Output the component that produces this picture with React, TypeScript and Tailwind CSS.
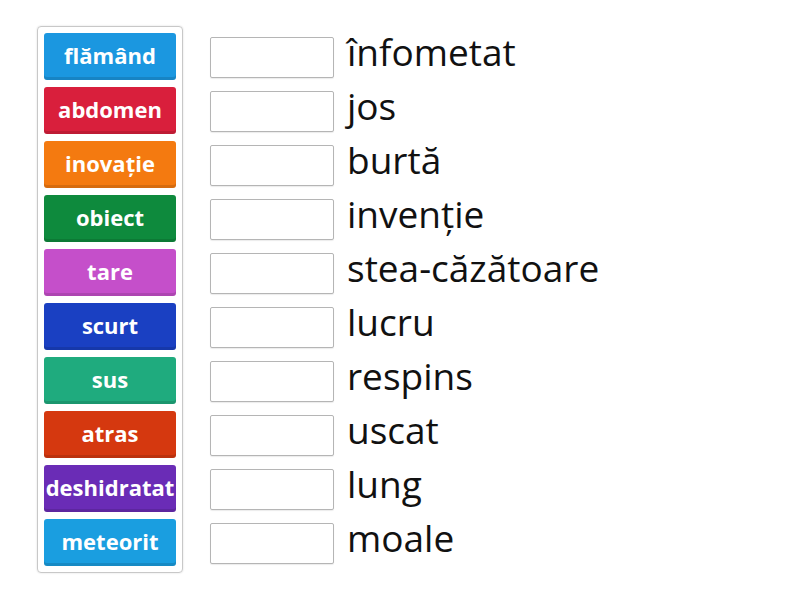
import React from "react";

const tiles: { label: string; cls: string }[] = [
  { label: "flămând", cls: "bg-[#1b97e0]" },
  { label: "abdomen", cls: "bg-[#d91f3c]" },
  { label: "inovație", cls: "bg-[#f47a10]" },
  { label: "obiect", cls: "bg-[#0e8a3d]" },
  { label: "tare", cls: "bg-[#c54fca]" },
  { label: "scurt", cls: "bg-[#1a40c2]" },
  { label: "sus", cls: "bg-[#1fab7e]" },
  { label: "atras", cls: "bg-[#d5380f]" },
  { label: "deshidratat", cls: "bg-[#6a2cb6]" },
  { label: "meteorit", cls: "bg-[#1a9ee0]" },
];

const words = [
  "înfometat",
  "jos",
  "burtă",
  "invenție",
  "stea-căzătoare",
  "lucru",
  "respins",
  "uscat",
  "lung",
  "moale",
];

export default function App() {
  return (
    <div
      className="w-[800px] h-[600px] bg-white flex items-start pt-[26px] pl-[37px]"
      style={{ fontFamily: '"Open Sans", "Noto Sans", sans-serif' }}
    >
      <div className="w-[146px] border border-[#c8c8c8] rounded-[4px] p-[6px] flex flex-col gap-[7px] shadow-[0_0_2px_rgba(0,0,0,0.15)]">
        {tiles.map((t) => (
          <div
            key={t.label}
            className={`${t.cls} h-[47px] pb-[4px] rounded-[3px] flex items-center justify-center text-white font-bold text-[22px] leading-none shadow-[inset_0_-3px_0_rgba(0,0,0,0.12)]`}
          >
            {t.label}
          </div>
        ))}
      </div>
      <div className="ml-[27px] pt-[11px] flex flex-col gap-[13px]">
        {words.map((w) => (
          <div key={w} className="flex items-center h-[41px]">
            <div className="w-[124px] h-[41px] border border-[#b5b5b5] rounded-[2px] bg-white shadow-[0_1px_1px_rgba(0,0,0,0.08)]" />
            <span className="ml-[13px] text-[37px] leading-none text-[#111111] -mt-[12px]">
              {w}
            </span>
          </div>
        ))}
      </div>
    </div>
  );
}
